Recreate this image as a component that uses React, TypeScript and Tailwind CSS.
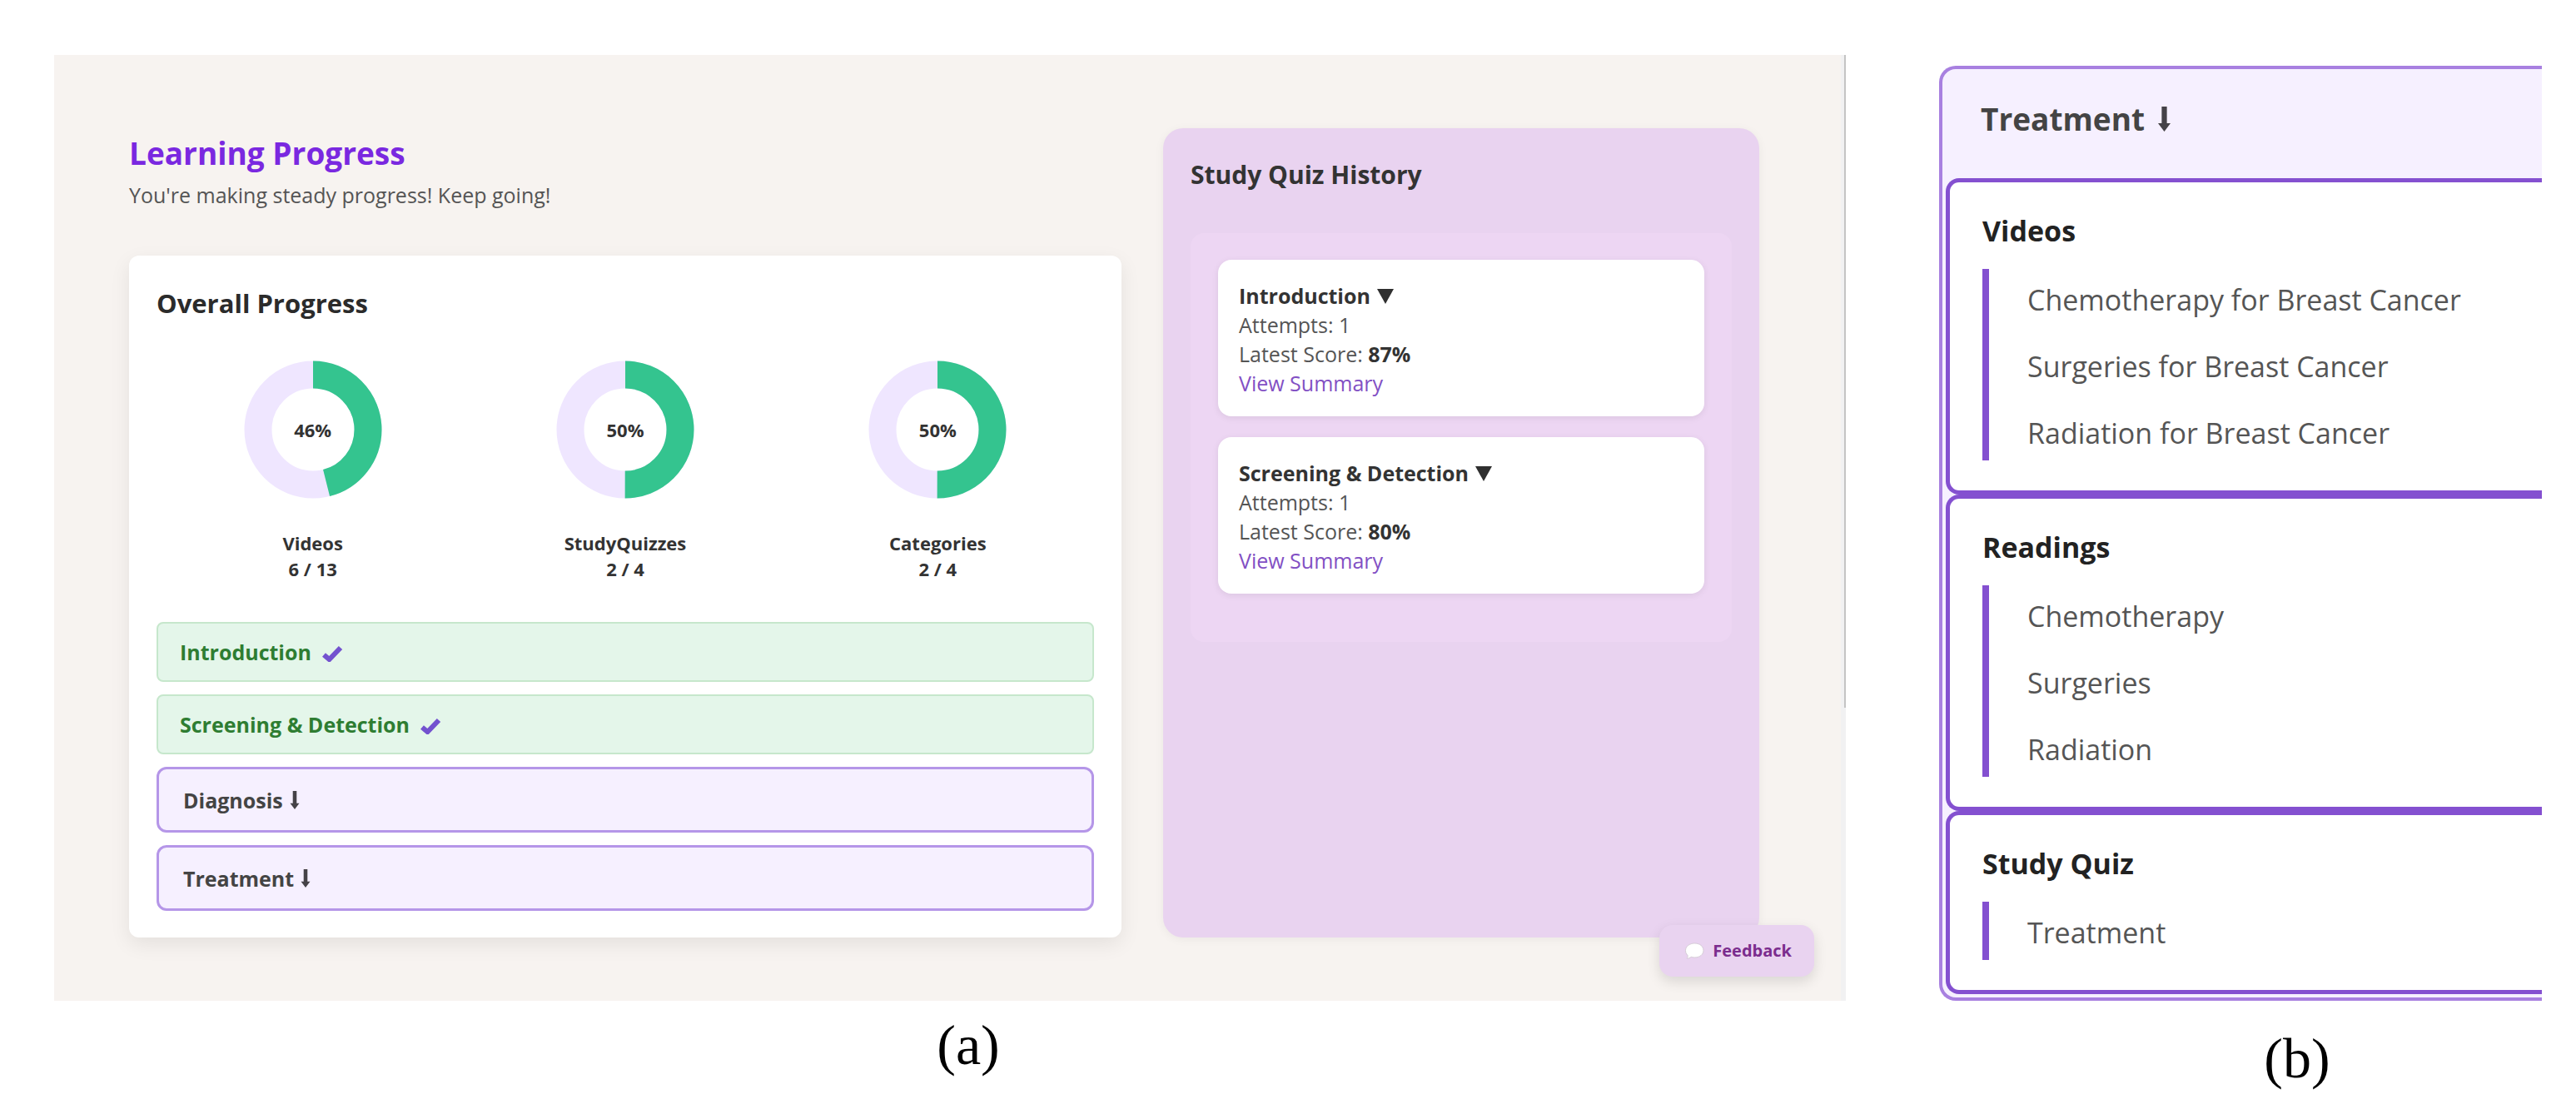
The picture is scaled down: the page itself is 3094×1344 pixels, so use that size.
import * as React from "react";

const rings = [
  { label: "Videos", done: 6, total: 13 },
  { label: "StudyQuizzes", done: 2, total: 4 },
  { label: "Categories", done: 2, total: 4 },
];

const completed = ["Introduction", "Screening & Detection"];
const pending = ["Diagnosis", "Treatment"];

const attempts = [
  { title: "Introduction", count: 1, score: 87 },
  { title: "Screening & Detection", count: 1, score: 80 },
];

const treatment = [
  {
    title: "Videos",
    items: [
      "Chemotherapy for Breast Cancer",
      "Surgeries for Breast Cancer",
      "Radiation for Breast Cancer",
    ],
  },
  { title: "Readings", items: ["Chemotherapy", "Surgeries", "Radiation"] },
  { title: "Study Quiz", items: ["Treatment"] },
];

function ProgressRing({ label, done, total }: { label: string; done: number; total: number }) {
  const percent = Math.floor((done / total) * 100);
  const length = 2 * Math.PI * 66;

  return (
    <div className="flex flex-col items-center">
      <div className="grid place-items-center">
        <svg viewBox="0 0 166 166" className="col-start-1 row-start-1 size-[166px] -rotate-90">
          <circle cx="83" cy="83" r="66" fill="none" stroke="#efe6ff" strokeWidth="33" />
          <circle
            cx="83"
            cy="83"
            r="66"
            fill="none"
            stroke="#34c48f"
            strokeWidth="33"
            strokeDasharray={`${(length * percent) / 100} ${length}`}
          />
        </svg>
        <span className="col-start-1 row-start-1 text-[22px] leading-[31px] font-bold">{percent}%</span>
      </div>
      <p className="mt-[38px] text-center text-[22px] leading-[31px] font-bold">
        {label}
        <br />
        {done} / {total}
      </p>
    </div>
  );
}

function CheckMark() {
  return (
    <svg viewBox="0 0 26 20" className="mt-1 h-5 w-[26px]" aria-hidden="true">
      <path d="M3 11.500L9.500 17L23 3" fill="none" stroke="#7352cf" strokeWidth="6" />
    </svg>
  );
}

function DownArrow({ className }: { className: string }) {
  return (
    <svg viewBox="0 0 12 24" className={className} aria-hidden="true">
      <path d="M3.500 0H8.500V16H12L6 24L0 16H3.500Z" fill="#454247" />
    </svg>
  );
}

function OverallProgress() {
  return (
    <section className="rounded-xl bg-white px-[33px] pt-8 pb-8 shadow-[0_8px_24px_rgba(0,0,0,0.08)]">
      <h2 className="text-[31px] leading-[50px] font-bold text-[#2b2b2b]">Overall Progress</h2>
      <div className="mt-11 grid grid-cols-3">
        {rings.map((ring) => (
          <ProgressRing key={ring.label} {...ring} />
        ))}
      </div>
      <div className="mt-12 flex flex-col gap-[15px]">
        {completed.map((name) => (
          <button
            key={name}
            className="flex h-[72px] items-center gap-3 rounded-lg border-2 border-[#c6e7cc] bg-[#e4f6ea] px-[26px] text-[25px] leading-9 font-bold text-[#2e7d32]"
          >
            {name}
            <CheckMark />
          </button>
        ))}
        {pending.map((name) => (
          <button
            key={name}
            className="flex h-[79px] items-center gap-2 rounded-xl border-3 border-[#b596e8] bg-[#f6f0ff] px-[29px] text-[25px] leading-9 font-bold text-[#444]"
          >
            {name}
            <DownArrow className="h-[22px] w-3" />
          </button>
        ))}
      </div>
    </section>
  );
}

function QuizHistory() {
  return (
    <section className="rounded-3xl bg-[#e9d3f0] px-[33px] pt-[31px] shadow-[0_2px_12px_rgba(0,0,0,0.05)]">
      <h2 className="text-[30px] leading-[50px] font-bold text-[#333]">Study Quiz History</h2>
      <div className="mt-[45px] flex flex-col gap-[25px] rounded-2xl bg-[#edd6f3] px-[33px] pt-8 pb-[58px]">
        {attempts.map((quiz) => (
          <article
            key={quiz.title}
            className="rounded-2xl bg-white px-[25px] pt-[26px] pb-[22px] text-[25px] leading-[35px] text-[#555] shadow-[0_2px_8px_rgba(0,0,0,0.08)]"
          >
            <h3 className="flex items-center gap-2 font-bold text-[#333]">
              {quiz.title}
              <svg viewBox="0 0 20 18" className="h-[18px] w-5" aria-hidden="true">
                <path d="M0 0H20L10 18Z" fill="#2f2f2f" />
              </svg>
            </h3>
            <p>Attempts: {quiz.count}</p>
            <p>
              Latest Score: <strong className="font-bold text-[#333]">{quiz.score}%</strong>
            </p>
            <a href="#summary" className="block text-[#8250c4]">
              View Summary
            </a>
          </article>
        ))}
      </div>
    </section>
  );
}

function FeedbackButton() {
  return (
    <button className="absolute right-[38px] bottom-[29px] flex h-[62px] items-center gap-[10px] rounded-2xl bg-[#e9d3f0] pr-[27px] pl-[30px] text-[20px] leading-8 font-bold text-[#7b2d8e] shadow-[0_6px_16px_rgba(0,0,0,0.12)]">
      <svg viewBox="0 0 24 20" className="h-5 w-6" aria-hidden="true">
        <path
          d="M12.500 1C18.500 1 23 4.500 23 9.500S18.500 18 12.500 18C11 18 9.500 17.800 8.200 17.300C7 18.500 5 19.200 3 19.200C4 18 4.300 16.600 4 15.300C2.200 13.800 1.500 11.800 1.500 9.500C1.500 4.500 6.500 1 12.500 1Z"
          fill="#fff"
          stroke="#d5cbd6"
        />
      </svg>
      Feedback
    </button>
  );
}

export default function App() {
  return (
    <main className="grid min-h-screen grid-cols-[2152fr_724fr] items-start gap-x-28 bg-white pr-[41px] pl-[65px] font-['Open_Sans',sans-serif] text-[#333]">
      <figure className="pt-[66px]">
        <div className="relative bg-[#f7f3f0] pt-[88px] pr-[104px] pb-[76px] pl-[90px]">
          <div className="grid grid-cols-[1192fr_716fr] gap-x-[50px]">
            <div>
              <h1 className="pt-[2px] text-[37px] leading-[55px] font-bold text-[#7a28e0]">Learning Progress</h1>
              <p className="mb-[49px] text-[25px] leading-[47px] text-[#555]">
                You're making steady progress! Keep going!
              </p>
              <OverallProgress />
            </div>
            <QuizHistory />
          </div>
          {/* scroll track and thumb */}
          <div className="absolute inset-y-0 right-0 w-[6px] bg-[#f1f1f2]">
            <div className="ml-auto h-[69%] w-[2px] bg-[#c4c4c4]" />
          </div>
          <FeedbackButton />
        </div>
        <figcaption className="mt-[13px] pl-[44px] text-center font-['Liberation_Serif',serif] text-[68px] leading-[80px] text-black">
          (a)
        </figcaption>
      </figure>

      <figure className="pt-[79px]">
        <div className="rounded-l-[20px] border-4 border-r-0 border-[#a880e0] bg-[#f6f0ff] pb-1 pl-1">
          <h2 className="flex h-[131px] items-center gap-4 pb-3 pl-[42px] text-[37px] leading-[55px] font-bold text-[#444]">
            Treatment
            <DownArrow className="h-[30px] w-[15px]" />
          </h2>
          {treatment.map((group) => (
            <section
              key={group.title}
              className="rounded-l-2xl border-[5px] border-r-0 border-[#8450d0] bg-white pt-[33px] pb-9 pl-[39px]"
            >
              <h3 className="text-[34px] leading-[50px] font-bold text-[#222]">{group.title}</h3>
              <ul className="mt-[21px] flex flex-col gap-[10px] border-l-8 border-[#8450d0] pl-[46px]">
                {group.items.map((item) => (
                  <li key={item} className="pt-1 text-[34px] leading-[66px] text-[#555]">
                    {item}
                  </li>
                ))}
              </ul>
            </section>
          ))}
        </div>
        <figcaption className="mt-[29px] pl-[136px] text-center font-['Liberation_Serif',serif] text-[68px] leading-[80px] text-black">
          (b)
        </figcaption>
      </figure>
    </main>
  );
}
